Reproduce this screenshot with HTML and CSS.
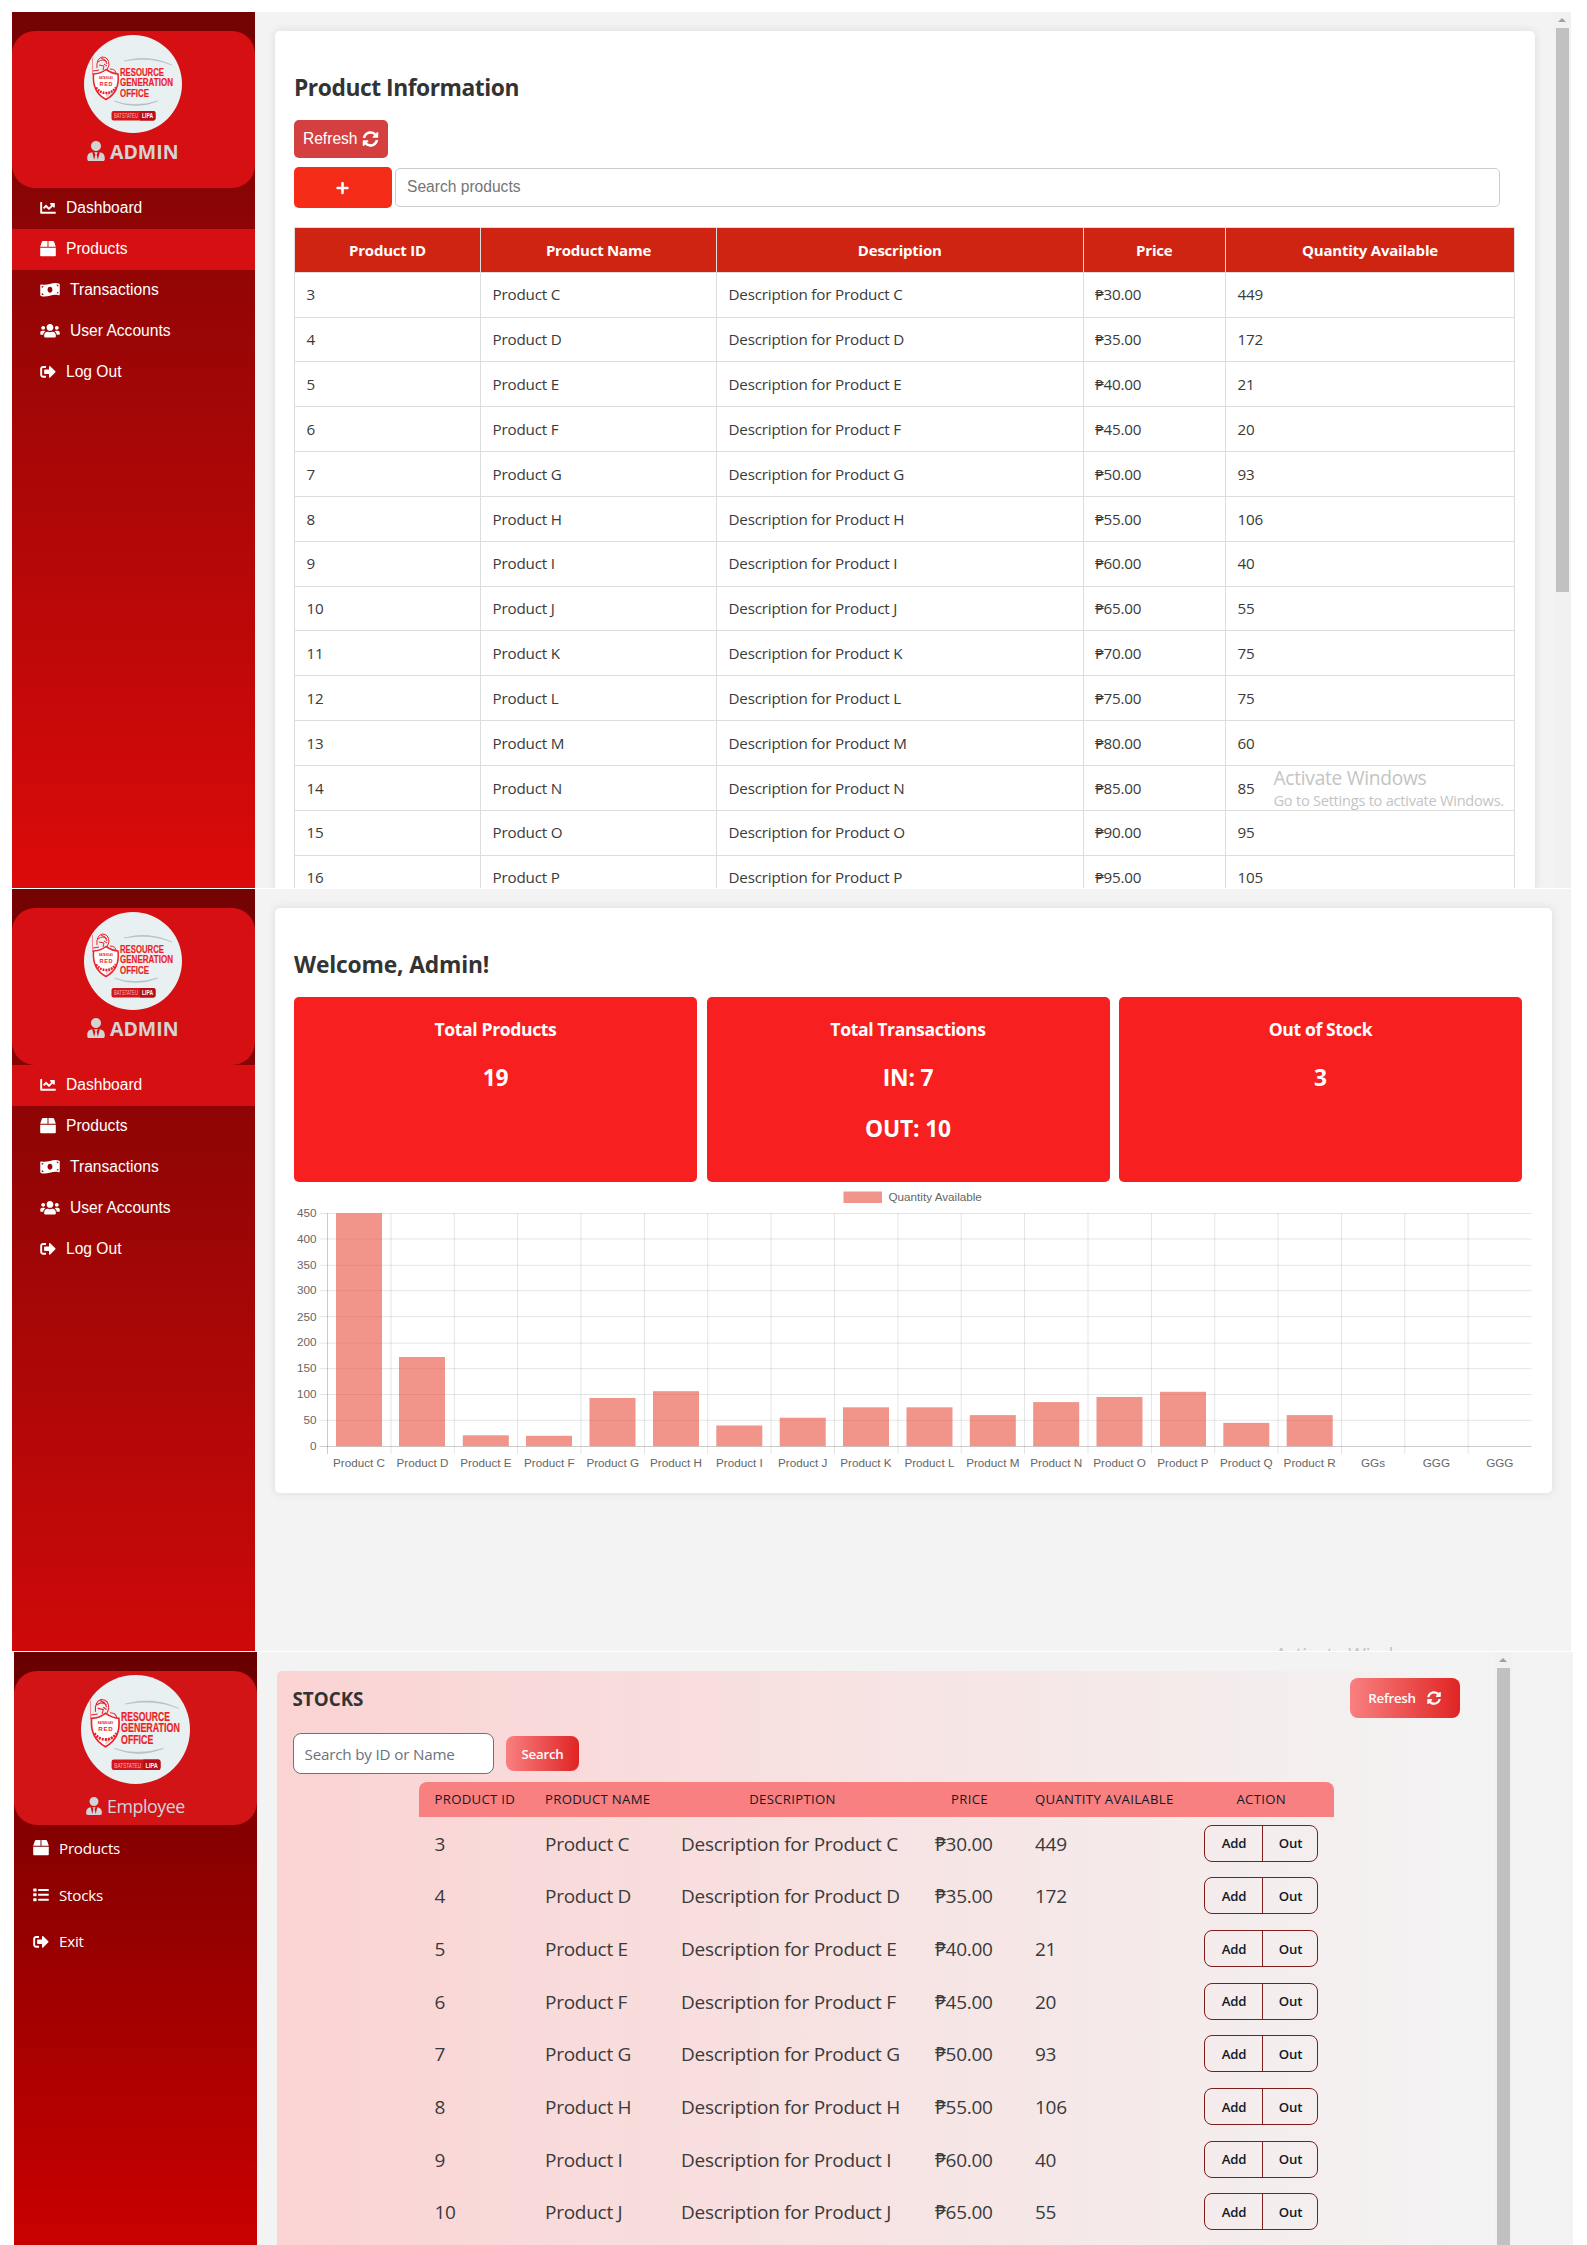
FILE: index.html
```html
<!DOCTYPE html>
<html lang="en">
<head>
<meta charset="utf-8">
<title>Resource Generation Office</title>
<link rel="stylesheet" href="styles.css">
</head>
<body>
<svg class="defs" width="0" height="0" aria-hidden="true">
  <symbol id="i-chart" viewBox="0 0 512 512"><path d="M496 384H64V80c0-8.84-7.16-16-16-16H16C7.16 64 0 71.16 0 80v336c0 17.67 14.33 32 32 32h464c8.84 0 16-7.16 16-16v-32c0-8.84-7.16-16-16-16zM464 96H345.94c-21.38 0-32.09 25.85-16.97 40.97l32.4 32.4L288 242.75l-73.37-73.37c-12.5-12.5-32.76-12.5-45.25 0l-68.69 68.69c-6.25 6.25-6.25 16.38 0 22.63l22.62 22.62c6.25 6.25 16.38 6.25 22.63 0L192 237.25l73.37 73.37c12.5 12.5 32.76 12.5 45.25 0l96-96 32.4 32.4c15.12 15.12 40.97 4.41 40.97-16.97V112c.01-8.84-7.15-16-15.99-16z"/></symbol>
  <symbol id="i-box" viewBox="0 0 512 512"><path d="M509.5 184.6L458.9 32.8C452.4 13.2 434.1 0 413.4 0H272v192h238.7c-.4-2.5-.4-5-1.2-7.4zM240 0H98.6c-20.7 0-39 13.2-45.5 32.8L2.5 184.6c-.8 2.4-.8 4.9-1.2 7.4H240V0zM0 224v240c0 26.5 21.5 48 48 48h416c26.5 0 48-21.5 48-48V224H0z"/></symbol>
  <symbol id="i-money" viewBox="0 0 640 512"><path d="M621.16 54.46C582.37 38.19 543.55 32 504.75 32c-123.17-.01-246.33 62.34-369.5 62.34-30.89 0-61.76-3.92-92.65-13.72-3.47-1.1-6.95-1.62-10.35-1.62C15.04 79 0 92.32 0 110.81v317.26c0 12.63 7.23 24.6 18.84 29.46C57.63 473.81 96.45 480 135.25 480c123.17 0 246.34-62.35 369.51-62.35 30.89 0 61.76 3.92 92.65 13.72 3.47 1.1 6.95 1.62 10.35 1.62 17.21 0 32.25-13.32 32.25-31.81V83.93c-.01-12.64-7.24-24.6-18.85-29.47zM48 132.22c20.12 5.04 41.12 7.57 62.72 8.93C104.84 170.54 79 192.69 48 192.69v-60.47zm0 285v-47.78c34.37 0 62.18 27.27 63.71 61.4-22.53-1.81-43.59-6.31-63.71-13.62zM320 352c-44.19 0-80-42.99-80-96 0-53.02 35.82-96 80-96s80 42.98 80 96c0 53.03-35.83 96-80 96zm272 27.78c-17.52-4.39-35.71-6.85-54.32-8.44 5.87-26.08 27.5-45.88 54.32-49.28v57.72zm0-236.11c-30.89-3.91-54.86-29.7-55.81-61.55 19.54 2.17 38.09 6.23 55.81 12.66v48.89z"/></symbol>
  <symbol id="i-users" viewBox="0 0 640 512"><path d="M96 224c35.3 0 64-28.7 64-64s-28.7-64-64-64-64 28.7-64 64 28.7 64 64 64zm448 0c35.3 0 64-28.7 64-64s-28.7-64-64-64-64 28.7-64 64 28.7 64 64 64zm32 32h-64c-17.6 0-33.5 7.1-45.1 18.6 40.3 22.1 68.9 62 75.1 109.4h66c17.7 0 32-14.3 32-32v-32c0-35.3-28.7-64-64-64zm-256 0c61.9 0 112-50.1 112-112S381.9 32 320 32 208 82.1 208 144s50.1 112 112 112zm76.8 32h-8.3c-20.8 10-43.9 16-68.5 16s-47.6-6-68.5-16h-8.3C179.6 288 128 339.6 128 403.2V432c0 26.5 21.5 48 48 48h288c26.5 0 48-21.5 48-48v-28.8c0-63.6-51.6-115.2-115.2-115.2zm-223.7-13.4C161.5 263.1 145.6 256 128 256H64c-35.3 0-64 28.7-64 64v32c0 17.7 14.3 32 32 32h65.9c6.3-47.4 34.9-87.3 75.2-109.4z"/></symbol>
  <symbol id="i-out" viewBox="0 0 512 512"><path d="M497 273L329 441c-15 15-41 4.5-41-17v-96H152c-13.3 0-24-10.7-24-24v-96c0-13.3 10.7-24 24-24h136V88c0-21.4 25.9-32 41-17l168 168c9.3 9.4 9.3 24.6 0 34zM192 436v-40c0-6.6-5.4-12-12-12H96c-17.7 0-32-14.3-32-32V160c0-17.7 14.3-32 32-32h84c6.6 0 12-5.4 12-12V76c0-6.6-5.4-12-12-12H96c-53 0-96 43-96 96v192c0 53 43 96 96 96h84c6.6 0 12-5.4 12-12z"/></symbol>
  <symbol id="i-tie" viewBox="0 0 448 512"><path d="M224 256c70.7 0 128-57.3 128-128S294.7 0 224 0 96 57.3 96 128s57.3 128 128 128zm95.8 32.6L272 480l-32-136 32-56h-96l32 56-32 136-47.8-191.4C56.9 292 0 350.3 0 422.4V464c0 26.5 21.5 48 48 48h352c26.5 0 48-21.5 48-48v-41.6c0-72.1-56.9-130.4-128.2-133.8z"/></symbol>
  <symbol id="i-sync" viewBox="0 0 512 512"><path d="M370.72 133.28C339.458 104.008 298.888 87.962 255.848 88c-77.458.068-144.328 53.178-162.791 126.85-1.344 5.363-6.122 9.15-11.651 9.15H24.103c-7.498 0-13.194-6.807-11.807-14.176C33.933 94.924 134.813 8 256 8c66.448 0 126.791 26.136 171.315 68.685L463.03 40.97C478.149 25.851 504 36.559 504 57.941V192c0 13.255-10.745 24-24 24H345.941c-21.382 0-32.09-25.851-16.971-40.971l41.75-41.749zM32 296h134.059c21.382 0 32.09 25.851 16.971 40.971l-41.75 41.75c31.262 29.273 71.835 45.319 114.876 45.28 77.418-.07 144.315-53.144 162.787-126.849 1.344-5.363 6.122-9.15 11.651-9.15h57.304c7.498 0 13.194 6.807 11.807 14.176C478.067 417.076 377.187 504 256 504c-66.448 0-126.791-26.136-171.315-68.685L48.97 471.03C33.851 486.149 8 475.441 8 454.059V320c0-13.255 10.745-24 24-24z"/></symbol>
  <symbol id="i-plus" viewBox="0 0 448 512"><path d="M416 208H272V64c0-17.67-14.33-32-32-32h-32c-17.67 0-32 14.33-32 32v144H32c-17.67 0-32 14.33-32 32v32c0 17.67 14.33 32 32 32h144v144c0 17.67 14.33 32 32 32h32c17.67 0 32-14.33 32-32V304h144c17.67 0 32-14.33 32-32v-32c0-17.67-14.33-32-32-32z"/></symbol>
  <symbol id="i-list" viewBox="0 0 512 512"><path d="M16 48h80a16 16 0 0 1 16 16v64a16 16 0 0 1-16 16H16a16 16 0 0 1-16-16V64a16 16 0 0 1 16-16zM16 208h80a16 16 0 0 1 16 16v64a16 16 0 0 1-16 16H16a16 16 0 0 1-16-16v-64a16 16 0 0 1 16-16zM16 368h80a16 16 0 0 1 16 16v64a16 16 0 0 1-16 16H16a16 16 0 0 1-16-16v-64a16 16 0 0 1 16-16zM176 64h320a16 16 0 0 1 16 16v32a16 16 0 0 1-16 16H176a16 16 0 0 1-16-16V80a16 16 0 0 1 16-16zM176 224h320a16 16 0 0 1 16 16v32a16 16 0 0 1-16 16H176a16 16 0 0 1-16-16v-32a16 16 0 0 1 16-16zM176 384h320a16 16 0 0 1 16 16v32a16 16 0 0 1-16 16H176a16 16 0 0 1-16-16v-32a16 16 0 0 1 16-16z"/></symbol>
  <symbol id="logo-art" viewBox="0 0 98 98">
    <circle cx="49" cy="49" r="49" fill="#e8f0f2"/>
    <path d="M40 26Q64 19 88 30Q66 21 40 26zM30 66Q50 73 74 66Q52 75 30 66z" fill="#b3bcbe" stroke="#b3bcbe" stroke-width=".5"/>
    <g fill="none" stroke="#f0202a" stroke-width="1">
      <path d="M8.500 23v17" stroke="#f58a8f"/>
      <path d="M13 33q-1-9 5-11q7 0 7 8l-2 5M14 27q5-4 9 0M17 23q5 1 6 6M15 30l5 1-1 4M20 29l3 2M26 34q6 0 6 5M9 36l6-1"/>
      <path d="M22 34.500Q29 39 34 39Q36 57 22 64.500Q8 57 9.500 39Q16 39 22 34.500z" fill="#fff" stroke-width="1.500"/>
    </g>
    <path d="M22 57v6Q31 58 33 49Q29 57 22 57z" fill="#e3d4d6"/>
    <path d="M12 52.500q4 5.500 10 5.500q6 0 10-5.500" fill="none" stroke="#ee1c25" stroke-width="2.500" stroke-dasharray="1.800 1"/>
    <rect x="27.500" y="76" width="44" height="9.500" rx="2" fill="#d3161c"/>
    <path d="M56 76h13.500a2 2 0 0 1 2 2v5.500a2 2 0 0 1-2 2H56z" fill="#b80f16"/>
  </symbol>
</svg>

<section class="screen products">
  <aside class="side">
    <div class="profile">
      <svg class="logo" viewBox="0 0 98 98">
        <use href="#logo-art"/>
        <text x="15" y="44" font-size="3.500" textLength="14" lengthAdjust="spacingAndGlyphs">BATANGAS</text>
        <text x="15.500" y="50.500" font-size="5.500" textLength="13">RED</text>
        <text class="name" x="36" y="41" textLength="44" lengthAdjust="spacingAndGlyphs">RESOURCE</text>
        <text class="name" x="36" y="51.300" textLength="53" lengthAdjust="spacingAndGlyphs">GENERATION</text>
        <text class="name" x="36" y="61.600" textLength="29" lengthAdjust="spacingAndGlyphs">OFFICE</text>
        <text class="thin" x="30" y="83.300" textLength="24" lengthAdjust="spacingAndGlyphs">BATSTATEU</text>
        <text class="campus" x="58" y="83.300" textLength="11" lengthAdjust="spacingAndGlyphs">LIPA</text>
      </svg>
      <div class="role"><svg class="tie"><use href="#i-tie"/></svg><span>ADMIN</span></div>
    </div>
    <nav class="menu">
      <a><svg><use href="#i-chart"/></svg>Dashboard</a>
      <a class="on"><svg><use href="#i-box"/></svg>Products</a>
      <a><svg class="wide"><use href="#i-money"/></svg>Transactions</a>
      <a><svg class="wide"><use href="#i-users"/></svg>User Accounts</a>
      <a><svg><use href="#i-out"/></svg>Log Out</a>
    </nav>
  </aside>
  <main class="main">
    <div class="card">
      <h2>Product Information</h2>
      <button class="refresh">Refresh <svg><use href="#i-sync"/></svg></button>
      <div class="tools">
        <button class="add"><svg><use href="#i-plus"/></svg></button>
        <input class="search" type="text" placeholder="Search products">
      </div>
      <table class="grid">
        <colgroup><col class="c1"><col class="c2"><col class="c3"><col class="c4"><col class="c5"></colgroup>
        <thead><tr><th>Product ID</th><th>Product Name</th><th>Description</th><th>Price</th><th>Quantity Available</th></tr></thead>
        <tbody>
          <tr><td>3</td><td>Product C</td><td>Description for Product C</td><td>₱30.00</td><td>449</td></tr>
          <tr><td>4</td><td>Product D</td><td>Description for Product D</td><td>₱35.00</td><td>172</td></tr>
          <tr><td>5</td><td>Product E</td><td>Description for Product E</td><td>₱40.00</td><td>21</td></tr>
          <tr><td>6</td><td>Product F</td><td>Description for Product F</td><td>₱45.00</td><td>20</td></tr>
          <tr><td>7</td><td>Product G</td><td>Description for Product G</td><td>₱50.00</td><td>93</td></tr>
          <tr><td>8</td><td>Product H</td><td>Description for Product H</td><td>₱55.00</td><td>106</td></tr>
          <tr><td>9</td><td>Product I</td><td>Description for Product I</td><td>₱60.00</td><td>40</td></tr>
          <tr><td>10</td><td>Product J</td><td>Description for Product J</td><td>₱65.00</td><td>55</td></tr>
          <tr><td>11</td><td>Product K</td><td>Description for Product K</td><td>₱70.00</td><td>75</td></tr>
          <tr><td>12</td><td>Product L</td><td>Description for Product L</td><td>₱75.00</td><td>75</td></tr>
          <tr><td>13</td><td>Product M</td><td>Description for Product M</td><td>₱80.00</td><td>60</td></tr>
          <tr><td>14</td><td>Product N</td><td>Description for Product N</td><td>₱85.00</td><td>85</td></tr>
          <tr><td>15</td><td>Product O</td><td>Description for Product O</td><td>₱90.00</td><td>95</td></tr>
          <tr><td>16</td><td>Product P</td><td>Description for Product P</td><td>₱95.00</td><td>105</td></tr>
        </tbody>
      </table>
    </div>
  </main>
  <div class="scroll"><i class="arrow"></i><i class="thumb"></i></div>
  <div class="watermark"><b>Activate Windows</b><span>Go to Settings to activate Windows.</span></div>
</section>

<section class="screen dashboard">
  <aside class="side">
    <div class="profile">
      <svg class="logo" viewBox="0 0 98 98">
        <use href="#logo-art"/>
        <text x="15" y="44" font-size="3.500" textLength="14" lengthAdjust="spacingAndGlyphs">BATANGAS</text>
        <text x="15.500" y="50.500" font-size="5.500" textLength="13">RED</text>
        <text class="name" x="36" y="41" textLength="44" lengthAdjust="spacingAndGlyphs">RESOURCE</text>
        <text class="name" x="36" y="51.300" textLength="53" lengthAdjust="spacingAndGlyphs">GENERATION</text>
        <text class="name" x="36" y="61.600" textLength="29" lengthAdjust="spacingAndGlyphs">OFFICE</text>
        <text class="thin" x="30" y="83.300" textLength="24" lengthAdjust="spacingAndGlyphs">BATSTATEU</text>
        <text class="campus" x="58" y="83.300" textLength="11" lengthAdjust="spacingAndGlyphs">LIPA</text>
      </svg>
      <div class="role"><svg class="tie"><use href="#i-tie"/></svg><span>ADMIN</span></div>
    </div>
    <nav class="menu">
      <a class="on"><svg><use href="#i-chart"/></svg>Dashboard</a>
      <a><svg><use href="#i-box"/></svg>Products</a>
      <a><svg class="wide"><use href="#i-money"/></svg>Transactions</a>
      <a><svg class="wide"><use href="#i-users"/></svg>User Accounts</a>
      <a><svg><use href="#i-out"/></svg>Log Out</a>
    </nav>
  </aside>
  <main class="main">
    <div class="card">
      <h2>Welcome, Admin!</h2>
      <div class="stats">
        <div class="stat"><h3>Total Products</h3><p>19</p></div>
        <div class="stat"><h3>Total Transactions</h3><p>IN: 7</p><p>OUT: 10</p></div>
        <div class="stat"><h3>Out of Stock</h3><p>3</p></div>
      </div>
      <svg class="chart" viewBox="0 0 1238 285">
        <rect x="549.500" y="4.500" width="38.500" height="11.500" class="bar"/>
        <text x="594.500" y="14">Quantity Available</text>
        <path class="lines" d="M25.500 26.500H1237.500M25.500 52H1237.500M25.500 78.300H1237.500M25.500 103.700H1237.500M25.500 129.700H1237.500M25.500 156.200H1237.500M25.500 181.700H1237.500M25.500 207.500H1237.500M25.500 233.300H1237.500"/>
        <path class="lines" d="M97 26V267M160.300 26V267M223.600 26V267M287 26V267M350.500 26V267M413.700 26V267M477 26V267M540.500 26V267M604 26V267M667.200 26V267M730.500 26V267M794 26V267M857.400 26V267M920.700 26V267M984 26V267M1047.500 26V267M1110.800 26V267M1174.200 26V267"/>
        <path class="axis" d="M33.500 26V267M25.500 259.500H1237.500"/>
        <g class="bar">
          <rect x="42" y="26.200" width="46" height="233"/><rect x="105" y="170" width="46" height="89.200"/><rect x="168.800" y="248.300" width="46" height="10.900"/><rect x="232" y="248.800" width="46" height="10.400"/><rect x="295.500" y="211" width="46" height="48.200"/><rect x="359" y="204.200" width="46" height="55"/><rect x="422.300" y="238.500" width="46" height="20.700"/><rect x="485.700" y="230.700" width="46" height="28.500"/><rect x="549" y="220.300" width="46" height="38.900"/><rect x="612.500" y="220.300" width="46" height="38.900"/><rect x="675.800" y="228.100" width="46" height="31.100"/><rect x="739.200" y="215.100" width="46" height="44.100"/><rect x="802.500" y="210" width="46" height="49.200"/><rect x="866" y="204.800" width="46" height="54.400"/><rect x="929.300" y="235.900" width="46" height="23.300"/><rect x="992.700" y="228.100" width="46" height="31.100"/>
        </g>
        <g text-anchor="end">
          <text x="22.500" y="29.500">450</text><text x="22.500" y="55.500">400</text><text x="22.500" y="82">350</text><text x="22.500" y="107">300</text><text x="22.500" y="133.500">250</text><text x="22.500" y="159">200</text><text x="22.500" y="185">150</text><text x="22.500" y="211">100</text><text x="22.500" y="236.500">50</text><text x="22.500" y="262.500">0</text>
        </g>
        <g text-anchor="middle">
          <text x="65" y="280">Product C</text><text x="128.500" y="280">Product D</text><text x="192" y="280">Product E</text><text x="255.300" y="280">Product F</text><text x="318.700" y="280">Product G</text><text x="382" y="280">Product H</text><text x="445.400" y="280">Product I</text><text x="508.700" y="280">Product J</text><text x="572" y="280">Product K</text><text x="635.400" y="280">Product L</text><text x="698.800" y="280">Product M</text><text x="762.200" y="280">Product N</text><text x="825.500" y="280">Product O</text><text x="889" y="280">Product P</text><text x="952.300" y="280">Product Q</text><text x="1015.600" y="280">Product R</text><text x="1079" y="280">GGs</text><text x="1142.400" y="280">GGG</text><text x="1205.800" y="280">GGG</text>
        </g>
      </svg>
    </div>
  </main>
  <div class="watermark"><b>Activate Windows</b></div>
</section>

<section class="screen stocks">
  <aside class="side">
    <div class="profile">
      <svg class="logo" viewBox="0 0 98 98">
        <use href="#logo-art"/>
        <text x="15" y="44" font-size="3.500" textLength="14" lengthAdjust="spacingAndGlyphs">BATANGAS</text>
        <text x="15.500" y="50.500" font-size="5.500" textLength="13">RED</text>
        <text class="name" x="36" y="41" textLength="44" lengthAdjust="spacingAndGlyphs">RESOURCE</text>
        <text class="name" x="36" y="51.300" textLength="53" lengthAdjust="spacingAndGlyphs">GENERATION</text>
        <text class="name" x="36" y="61.600" textLength="29" lengthAdjust="spacingAndGlyphs">OFFICE</text>
        <text class="thin" x="30" y="83.300" textLength="24" lengthAdjust="spacingAndGlyphs">BATSTATEU</text>
        <text class="campus" x="58" y="83.300" textLength="11" lengthAdjust="spacingAndGlyphs">LIPA</text>
      </svg>
      <div class="role"><svg class="tie"><use href="#i-tie"/></svg><span>Employee</span></div>
    </div>
    <nav class="menu">
      <a><svg><use href="#i-box"/></svg>Products</a>
      <a><svg><use href="#i-list"/></svg>Stocks</a>
      <a><svg><use href="#i-out"/></svg>Exit</a>
    </nav>
  </aside>
  <main class="panel">
    <header class="bar-top">
      <h2>STOCKS</h2>
      <button class="grad refresh">Refresh <svg><use href="#i-sync"/></svg></button>
    </header>
    <div class="find">
      <input type="text" placeholder="Search by ID or Name">
      <button class="grad go">Search</button>
    </div>
    <table class="stock">
      <colgroup><col class="s1"><col class="s2"><col class="s3"><col class="s4"><col class="s5"><col class="s6"></colgroup>
      <thead><tr><th>PRODUCT ID</th><th>PRODUCT NAME</th><th class="mid">DESCRIPTION</th><th class="mid">PRICE</th><th>QUANTITY AVAILABLE</th><th class="mid">ACTION</th></tr></thead>
      <tbody>
        <tr><td>3</td><td>Product C</td><td>Description for Product C</td><td>₱30.00</td><td>449</td><td><div class="pair"><button>Add</button><button>Out</button></div></td></tr>
        <tr><td>4</td><td>Product D</td><td>Description for Product D</td><td>₱35.00</td><td>172</td><td><div class="pair"><button>Add</button><button>Out</button></div></td></tr>
        <tr><td>5</td><td>Product E</td><td>Description for Product E</td><td>₱40.00</td><td>21</td><td><div class="pair"><button>Add</button><button>Out</button></div></td></tr>
        <tr><td>6</td><td>Product F</td><td>Description for Product F</td><td>₱45.00</td><td>20</td><td><div class="pair"><button>Add</button><button>Out</button></div></td></tr>
        <tr><td>7</td><td>Product G</td><td>Description for Product G</td><td>₱50.00</td><td>93</td><td><div class="pair"><button>Add</button><button>Out</button></div></td></tr>
        <tr><td>8</td><td>Product H</td><td>Description for Product H</td><td>₱55.00</td><td>106</td><td><div class="pair"><button>Add</button><button>Out</button></div></td></tr>
        <tr><td>9</td><td>Product I</td><td>Description for Product I</td><td>₱60.00</td><td>40</td><td><div class="pair"><button>Add</button><button>Out</button></div></td></tr>
        <tr><td>10</td><td>Product J</td><td>Description for Product J</td><td>₱65.00</td><td>55</td><td><div class="pair"><button>Add</button><button>Out</button></div></td></tr>
      </tbody>
    </table>
  </main>
  <div class="scroll"><i class="arrow"></i><i class="thumb"></i></div>
</section>
</body>
</html>
```

FILE: styles.css
```css
* { box-sizing: border-box; }
html, body { margin: 0; background: #fff; }
body {
  height: 2245px;
  padding-top: 12px;
  overflow: hidden;
  font-family: "Open Sans", "Noto Sans", sans-serif;
  font-size: 15.2px;
  letter-spacing: -0.012em;
  color: #3a3a3a;
}
h2, h3, p { margin: 0; }
h2 { color: #333; }
svg { display: block; fill: currentColor; flex: none; }
.defs { position: absolute; }
button, input { font: inherit; letter-spacing: inherit; margin: 0; }
button { border: 0; padding: 0; color: #fff; display: flex; align-items: center; justify-content: center; }

/* screens */
.screen { position: relative; display: flex; overflow: hidden; background: #f3f3f3; }
.products, .dashboard { margin-left: 11.500px; width: 1559px; }
.products { height: 876px; margin-bottom: 1px; }
.dashboard { height: 762px; margin-bottom: 1px; }
.stocks { height: 593px; margin-left: 14px; width: 1559px; }

/* sidebar */
.side {
  width: 243.500px;
  flex: none;
  padding-top: 19px;
  background: linear-gradient(#740303, #dc0a0a) 0 0 / 100% 876px no-repeat;
  color: #fff;
}
.profile {
  height: 157px;
  padding: 4px 1px 0 0;
  border-radius: 23px;
  background: #d61012;
  display: flex;
  flex-direction: column;
  align-items: center;
}
.logo { width: 98px; height: 98px; overflow: visible; font-family: "Liberation Sans", Arial, sans-serif; font-weight: 700; letter-spacing: 0; fill: #ee1c25; }
.logo .name { font-size: 11.800px; stroke: #ee1c25; stroke-width: .2px; }
.logo .thin { font-size: 7px; font-weight: 400; fill: #f6b9bb; }
.logo .campus { font-size: 7px; fill: #fff; }
.role {
  display: flex;
  align-items: center;
  gap: 5px;
  margin-top: 4px;
  height: 28px;
  font-size: 19.500px;
  font-weight: 700;
  letter-spacing: 0;
  color: #d3d3d3;
}
.tie { width: 18px; height: 20px; }
.menu a {
  display: flex;
  align-items: center;
  gap: 10px;
  height: 41px;
  padding: 0 0 1px 28.500px;
  font-family: "Liberation Sans", Arial, sans-serif;
  font-size: 15.600px;
  letter-spacing: 0;
}
.menu a.on { background: #d61012; }
.menu svg { width: 16px; height: 15.600px; }
.menu svg.wide { width: 20px; }

/* white content cards */
.main { flex: 1; padding: 19px 19px 0 19.500px; }
.card {
  background: #fff;
  border-radius: 5px;
  box-shadow: 0 0 10px rgba(0, 0, 0, .1);
  padding: 39px 19.500px 0;
}
.card h2 { font-size: 22.800px; line-height: 36px; letter-spacing: -0.02em; }
.dashboard .card h2 { letter-spacing: -0.007em; }
.products .card { height: 860px; }
.card .refresh {
  width: 93.500px;
  height: 38px;
  margin-top: 14px;
  gap: 4px;
  border-radius: 5px;
  background: #d44040;
  font-family: "Liberation Sans", Arial, sans-serif;
  font-size: 15.600px;
  letter-spacing: 0;
}
.card .refresh svg { width: 17px; height: 16px; }
.tools { display: flex; align-items: center; gap: 3.500px; margin: 9px 16px 19px 0; }
.add { width: 97.500px; height: 41px; border-radius: 5px; background: #f42c18; }
.add svg { width: 13px; height: 14px; }
.search {
  flex: 1;
  height: 39px;
  padding: 0 11px 1px;
  border: 1px solid #ccc;
  border-radius: 5px;
  font-family: "Liberation Sans", Arial, sans-serif;
  font-size: 15.600px;
  letter-spacing: 0;
}
input::placeholder { color: #757575; }

.grid { width: 1221px; border-collapse: collapse; table-layout: fixed; }
.grid .c1 { width: 186px; }
.grid .c2 { width: 236px; }
.grid .c3 { width: 366.500px; }
.grid .c4 { width: 142.500px; }
.grid th, .grid td { border: 1px solid #ddd; padding: 0 11.500px .5px 11.500px; height: 44.840px; line-height: 20px; }
.grid th { background: #cf2412; color: #fff; font-size: 15px; letter-spacing: -0.015em; padding: 0 11.500px; }

/* scrollbars */
.scroll { width: 16.500px; flex: none; background: #f1f1f1; display: flex; flex-direction: column; align-items: center; }
.arrow { margin: 6px 0 5px; border: 4px solid transparent; border-top: 0; border-bottom: 4px solid #a0a0a0; height: 4px; width: 8px; }
.thumb { width: 13px; height: 564px; margin-top: 1px; background: #c1c1c1; }

/* desktop watermark laid over the page */
.watermark { position: absolute; left: 1262px; top: 751px; color: #c4c4c4; display: flex; flex-direction: column; white-space: nowrap; }
.watermark b { font-weight: 400; font-size: 19.200px; line-height: 30px; letter-spacing: -0.015em; }
.watermark span { font-size: 14.600px; line-height: 14px; letter-spacing: -0.017em; }
.dashboard .watermark { left: 1263.500px; }

/* dashboard */
.dashboard .card { height: 585px; }
.stats { display: flex; gap: 9.500px; margin: 14px 10px 4.500px 0; }
.stat { flex: 1; height: 185px; padding-top: 19px; border-radius: 5px; background: #f71f1f; color: #fff; text-align: center; font-weight: 700; }
.stat h3 { font-size: 17.600px; line-height: 26px; letter-spacing: -0.022em; }
.stat p { font-size: 22.800px; line-height: 32px; margin-top: 18.700px; letter-spacing: -0.008em; }
.stat h3 + p { margin-top: 20px; }
.chart { width: 1238px; height: 285px; font-family: "Liberation Sans", Arial, sans-serif; font-size: 11.700px; letter-spacing: 0; fill: #666; }
.bar { fill: rgba(231, 76, 60, .6); }
.lines { stroke: rgba(0, 0, 0, .1); fill: none; }
.axis { stroke: rgba(0, 0, 0, .2); fill: none; }

/* employee stocks */
.stocks .side { width: 243px; background: linear-gradient(#680000, #ca0000); }
.stocks .profile { height: 153.500px; padding-right: 0; background: #d31416; border-radius: 23px; }
.stocks .logo { width: 109px; height: 109px; }
.stocks .role { margin-top: 8px; font-weight: 400; font-size: 17.800px; letter-spacing: -0.024em; color: #d1d5db; }
.stocks .tie { width: 16px; height: 18px; }
.stocks .menu a { height: 46.800px; padding: 0 0 0 19px; font-family: inherit; font-size: 15.200px; letter-spacing: -0.016em; }
.stocks .panel {
  width: 1198px;
  margin: 19px 20px 0 20px;
  padding: 7px 15.500px 0 15.500px;
  border-radius: 5px 5px 0 0;
  background: linear-gradient(90deg, #fbd3d3, #f3f3f3);
}
.bar-top { display: flex; justify-content: space-between; align-items: flex-start; height: 55px; }
.bar-top h2 { font-size: 18.800px; line-height: 42px; letter-spacing: 0; }
.grad { background: linear-gradient(90deg, #f98080, #e02424); border-radius: 8px; font-size: 13.300px; font-weight: 600; letter-spacing: -0.02em; }
.bar-top .refresh { width: 110px; height: 40px; gap: 11px; }
.bar-top svg { width: 14px; height: 14px; }
.find { display: flex; align-items: center; gap: 12px; height: 41px; margin-bottom: 8px; }
.find input { width: 201.500px; height: 41px; padding: 0 11px; border: 1px solid #6b7280; border-radius: 8px; background: #fff; }
.find input::placeholder { color: #6b7280; }
.go { width: 73px; height: 35px; }
.stock { width: 915.500px; margin-left: 126px; border-collapse: separate; border-spacing: 0; table-layout: fixed; font-size: 19px; letter-spacing: -0.014em; }
.stock .s1 { width: 110.500px; }
.stock .s2 { width: 136px; }
.stock .s3 { width: 254px; }
.stock .s4 { width: 100px; }
.stock .s5 { width: 168.500px; }
.stock th { height: 35px; padding: 0 0 1px 16px; background: #f98080; text-align: left; font-size: 13.200px; font-weight: 500; letter-spacing: 0.022em; color: #111928; white-space: nowrap; }
.stock th:first-child { border-radius: 8px 0 0 0; }
.stock th:last-child { border-radius: 0 8px 0 0; }
.stock th.mid { text-align: center; padding: 0 15px 1px 16px; }
.stock td { height: 52.650px; padding: 1px 0 0 16px; white-space: nowrap; }
.stock td:last-child { padding: 0 0 0 16.500px; }
.pair { display: flex; width: 114px; height: 37px; border: 1px solid #7f1d1d; border-radius: 8px; }
.pair button { flex: 1 1 54px; background: none; color: #111928; font-size: 13.200px; font-weight: 600; letter-spacing: -0.01em; padding-left: 1px; }
.pair button:first-child { flex-basis: 56px; }
.pair button + button { border-left: 1px solid #7f1d1d; }
.stocks .scroll .thumb { height: 577px; flex: none; }
```
